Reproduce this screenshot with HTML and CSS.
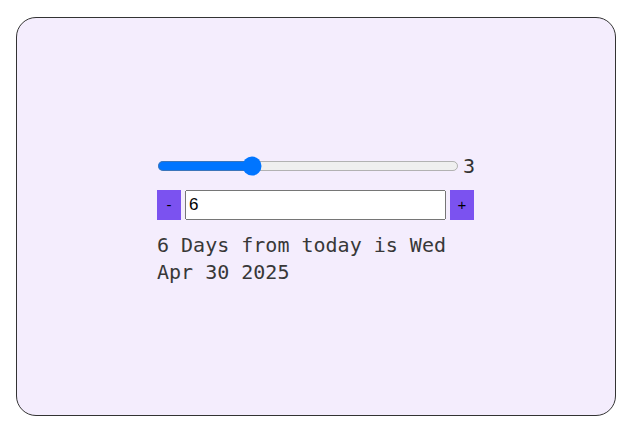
FILE: index.html
```html
<!DOCTYPE html>
<html>
<head>
<meta charset="utf-8">
<link rel="stylesheet" href="styles.css">
</head>
<body>
<div class="card">
  <div class="box">
    <div class="slider-row">
      <input class="slider" type="range" min="0" max="10" value="3">
      <span class="val">3</span>
    </div>
    <div class="input-row">
      <button class="btn">-</button>
      <input class="num" type="text" value="6">
      <button class="btn">+</button>
    </div>
    <p class="result">6 Days from today is Wed Apr 30 2025</p>
  </div>
</div>
</body>
</html>
```
FILE: styles.css
```css
html, body { margin: 0; padding: 0; }
body {
  padding: 17px 0 0 16px;
  font-family: "DejaVu Sans Mono", "Liberation Mono", monospace;
}
.card {
  box-sizing: border-box;
  width: 600px;
  height: 399px;
  border: 1px solid #333;
  border-radius: 20px;
  background: #f4edfd;
  display: flex;
  align-items: center;
  justify-content: center;
}
.box {
  width: 318px;
  margin-top: 6px;
}
.slider-row {
  display: flex;
  align-items: center;
}
.slider {
  width: 242px;
  margin: 0;
  zoom: 1.25;
}
.val {
  margin-left: 4px;
  font-size: 20px;
  color: #333;
}
.input-row {
  display: flex;
  gap: 4px;
  margin-top: 12px;
  margin-right: 1px;
  height: 30px;
}
.btn {
  width: 24px;
  border: none;
  background: #7b52f0;
  color: #000;
  padding: 0;
  font-size: 15px;
}
.num {
  flex: 1;
  min-width: 0;
  margin: 0;
  font-size: 17px;
  padding: 1px 2px;
}
.result {
  margin: 12px 0 0;
  font-size: 20px;
  line-height: 27px;
  color: #383838;
  font-weight: 300;
}
```
